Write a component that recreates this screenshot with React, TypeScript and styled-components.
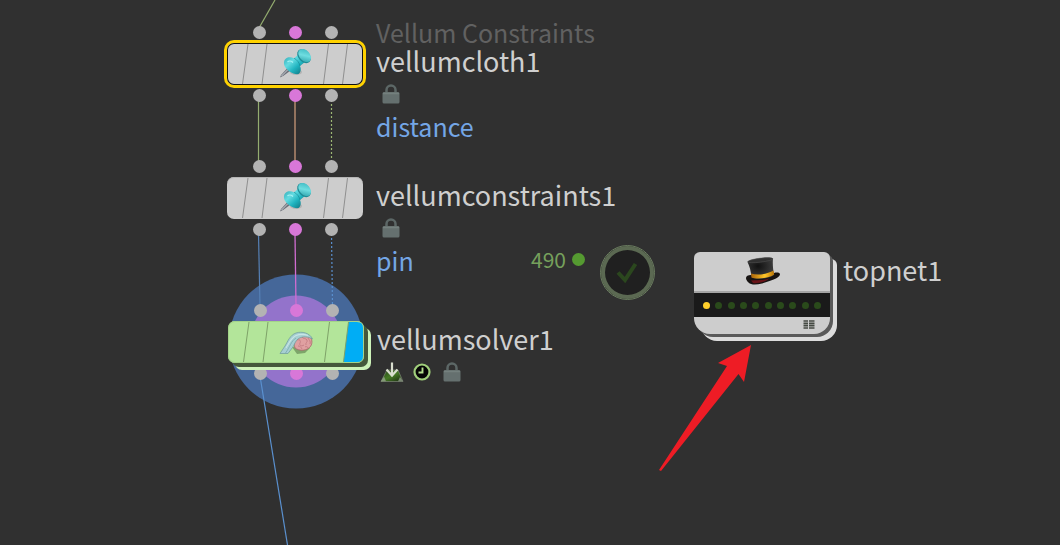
import React from "react";
import styled, { createGlobalStyle } from "styled-components";

const GlobalStyle = createGlobalStyle`
  *, *::before, *::after { box-sizing: border-box; }
  body {
    margin: 0;
    background: #303030;
    font-family: "Noto Sans CJK SC", "Noto Sans", sans-serif;
  }
`;

const GRAY = "#b3b3b3";
const PINK = "#d877d8";

const Network = styled.main`
  position: relative;
  min-height: 100vh;
  overflow: hidden;
  background: #303030;
`;

const Layer = styled.svg`
  position: absolute;
  inset: 0;
  width: 100%;
  height: 100%;
  pointer-events: none;
`;

const Placed = styled.div<{ $x: number; $y: number }>`
  position: absolute;
  left: ${(p) => p.$x}px;
  top: ${(p) => p.$y}px;
`;

const NodeColumn = styled(Placed)`
  width: 136px;
  display: flex;
  flex-direction: column;
  gap: 4px;
`;

const PortRow = styled.div`
  display: flex;
  justify-content: center;
  gap: 23px;
`;

const Port = styled.span<{ $color: string }>`
  width: 13px;
  height: 13px;
  border-radius: 50%;
  background: ${(p) => p.$color};
`;

type Variant = "plain" | "selected" | "displayed";

const bodyShadow: Record<Variant, string> = {
  plain: "inset 0 1px 0 #b5b5b5",
  selected: "inset 0 0 0 1px #111, 0 0 0 3px #ffd200",
  displayed: "inset 0 0 0 1px #a3d389, 4px 4px 0 #45583b, 7px 7px 0 #cdf2b9",
};

const Body = styled.button<{ $variant: Variant }>`
  position: relative;
  display: flex;
  align-items: center;
  justify-content: center;
  width: 100%;
  height: 42px;
  padding: 0;
  border: 0;
  border-radius: 7px;
  color: ${(p) => (p.$variant === "displayed" ? "#7ea268" : "#8f8f8f")};
  background: ${(p) => (p.$variant === "displayed" ? "#b3e59a" : "#cdcdcd")};
  box-shadow: ${(p) => bodyShadow[p.$variant]};
`;

const Slots = styled.svg`
  position: absolute;
  inset: 0;
`;

const Icon = styled.svg`
  position: relative;
  flex: none;
  display: block;
`;

const Caption = styled(Placed)`
  display: flex;
  flex-direction: column;
  white-space: nowrap;
`;

const Line = styled.span<{ $color: string }>`
  font-size: 25px;
  line-height: 28px;
  color: ${(p) => p.$color};
`;

const Name = styled.h2`
  margin: 0;
  font-size: 27px;
  font-weight: 400;
  line-height: 30px;
  color: #cfcfcf;
`;

const Badges = styled.div`
  display: flex;
  height: 36px;
`;

const Badge = styled.span`
  display: flex;
  align-items: center;
  justify-content: center;
  width: 30px;
`;

const TopNode = styled(Placed)`
  width: 136px;
  display: flex;
  flex-direction: column;
  border-radius: 6px 6px 16px 16px;
  background: #cdcdcd;
  box-shadow: 3px 3px 0 #5a5a5a, 7px 7px 0 #dcdcdc;
`;

const HatArea = styled.div`
  display: flex;
  justify-content: center;
  height: 41px;
  border-bottom: 2px solid #a4a4a4;
`;

const WorkItems = styled.div`
  display: flex;
  align-items: center;
  justify-content: space-between;
  height: 24px;
  padding: 0 9px;
  background: #1a1a1a;
`;

const Item = styled.span<{ $active: boolean }>`
  width: 7px;
  height: 7px;
  border-radius: 50%;
  background: ${(p) => (p.$active ? "#ffcf2b" : "#2a4a1b")};
`;

const TopFooter = styled.div`
  display: flex;
  justify-content: flex-end;
  height: 17px;
  padding: 3px 15px 0 0;
`;

const Status = styled(Placed)`
  display: flex;
  gap: 15px;
`;

const Count = styled.div`
  display: flex;
  align-items: center;
  gap: 6px;
  height: 28px;
  font-size: 21px;
  line-height: 26px;
  color: #76a05c;

  &::after {
    content: "";
    width: 13px;
    height: 13px;
    border-radius: 50%;
    background: #559a31;
  }
`;

const Done = styled.span`
  display: flex;
  align-items: center;
  justify-content: center;
  width: 55px;
  height: 55px;
  border: 1px solid #6b7d60;
  border-radius: 50%;
  background: #202020;
  box-shadow: inset 0 0 0 4px #5b6952;
`;

function PinIcon() {
  return (
    <Icon width="40" height="38" viewBox="0 0 40 38" aria-hidden="true">
      <defs>
        <linearGradient id="pinBody" x1="0" y1="0" x2="1" y2="1">
          <stop offset="0" stopColor="#2ba3af" />
          <stop offset="0.35" stopColor="#63dbe1" />
          <stop offset="0.6" stopColor="#20b4c0" />
          <stop offset="1" stopColor="#0b6470" />
        </linearGradient>
        <linearGradient id="pinHead" x1="0" y1="0" x2="1" y2="1">
          <stop offset="0" stopColor="#35b3bd" />
          <stop offset="0.5" stopColor="#6fdde0" />
          <stop offset="1" stopColor="#249ba5" />
        </linearGradient>
      </defs>
      <ellipse cx="21" cy="27" rx="6" ry="3" fill="#777" opacity="0.3" />
      <path d="M5 32.6 6 30 12 23.5 15 26 8.5 30.8Z" fill="#6d717a" />
      <path d="M6.5 31 12.5 25" stroke="#c9ced4" strokeWidth="1" />
      <path
        d="M10 14.5C12 11.8 16 12 19 13.2L23.5 9.5 30.5 16.5 25 21C26.6 24 25.5 28 23.5 29 19.5 30 10 25.5 9 19 8.8 17 9.2 15.5 10 14.5Z"
        fill="url(#pinBody)"
      />
      <path d="M19 13.2C22 14.5 24.5 18 25 21" stroke="#168793" strokeWidth="1" fill="none" opacity="0.6" />
      <path d="M12.5 17C14 15.5 16.5 16 18 17.5" stroke="#a6f2f4" strokeWidth="1.3" fill="none" />
      <ellipse cx="29" cy="11.2" rx="8" ry="5.6" transform="rotate(47 29 11.2)" fill="#1f8b95" />
      <ellipse cx="29.7" cy="10.5" rx="7.6" ry="5.2" transform="rotate(47 29.7 10.5)" fill="url(#pinHead)" />
    </Icon>
  );
}

function ClothIcon() {
  return (
    <Icon width="44" height="34" viewBox="0 0 44 34" aria-hidden="true">
      <path d="M18 22 36 23 31 28 23 29Z" fill="#48663a" opacity="0.5" />
      <path
        d="M22 13C25 9 33 8 37 13 39 17 37.5 21 35 23 31 26 25 26 21 23 19.500 19 20 16 22 13Z"
        fill="#e0a0a1"
        stroke="#a9676b"
        strokeWidth="0.8"
      />
      <path
        d="M23 15c3-1 4 1 3 3s1 4 4 2M28 12c1 2 4 1 5 3s-2 3-1 5M24 21c2 0 3 1 4 3M34 13c1 2 3 3 2 6M31 22c1-1 3 0 3 1"
        stroke="#c47d82"
        strokeWidth="0.9"
        fill="none"
      />
      <path
        d="M6 28.500 11 21C14 16 16 10 22 8 28 6 36 8 38.500 14 34 11.500 29 11 24.500 13.500 21 16 20.500 20 18.500 22.500L14 28.500Z"
        fill="#a6cfd2"
        stroke="#6b999b"
        strokeWidth="0.7"
      />
      <path d="M12 23C15 18 17 13 22 10.500 26 9 30 9 34 10.500" stroke="#c8e5e5" strokeWidth="1.1" fill="none" />
      <path d="M11.500 28C16 22 17 16 22 13" stroke="#7daeb0" strokeWidth="0.9" fill="none" />
    </Icon>
  );
}

function HatIcon() {
  return (
    <Icon width="40" height="38" viewBox="0 0 40 38" aria-hidden="true">
      <defs>
        <radialGradient id="hatFelt" cx="0.4" cy="0.4" r="0.7">
          <stop offset="0" stopColor="#111" />
          <stop offset="1" stopColor="#444" />
        </radialGradient>
        <linearGradient id="hatBand">
          <stop offset="0" stopColor="#a86208" />
          <stop offset="0.6" stopColor="#ffc629" />
          <stop offset="1" stopColor="#b87308" />
        </linearGradient>
      </defs>
      <path
        d="M4 26C4 24 6 23 9 23L32 21C35 20 38 20.5 38 22.5 37 26.5 28 29 20 31.5 14 33 9 33 6.5 30.5 5 29 4 27.5 4 26Z"
        fill="#171312"
      />
      <path d="M9 28.5C15 28 22 28.5 27 26.5 24 30 15 31.8 11 31Z" fill="#681318" />
      <path d="M5.5 10C7 7 28 4 31 6.5 30.5 12 31 17 32 23 26 27 15 28 9.5 25.5 9 19 7.5 14 5.5 10Z" fill="url(#hatFelt)" />
      <ellipse cx="18.2" cy="8.2" rx="12.5" ry="2" transform="rotate(-7 18.2 8.2)" fill="#303030" stroke="#555" strokeWidth="0.5" />
      <path d="M9 21.5C16 23.5 26 22 31.5 18.5L32.2 22.5C26 26.5 15 27.5 9.5 25.5Z" fill="url(#hatBand)" />
    </Icon>
  );
}

function LockIcon() {
  return (
    <Icon width="18" height="20" viewBox="0 0 18 20" role="img" aria-label="Locked">
      <path d="M4.5 9V6a4.500 4.500 0 0 1 9 0v3" fill="none" stroke="#5c6766" strokeWidth="2.5" />
      <rect x="0.5" y="8" width="17" height="11.5" rx="1.5" fill="#65706f" />
      <path d="M1 9.5h16" stroke="#74807e" strokeWidth="1.5" />
    </Icon>
  );
}

function CacheIcon() {
  return (
    <Icon width="24" height="20" viewBox="0 0 24 20" role="img" aria-label="Loaded">
      <defs>
        <linearGradient id="hill" x1="0" y1="0" x2="1" y2="1">
          <stop offset="0" stopColor="#26401b" />
          <stop offset="0.5" stopColor="#457a24" />
          <stop offset="1" stopColor="#172410" />
        </linearGradient>
      </defs>
      <path d="M1 19.5 7 8H18L23 19.5Z" fill="url(#hill)" stroke="#8b9685" strokeWidth="0.6" />
      <path d="M1 19.2 4 14.5 6 19.2ZM18 19.2 20 15 23 19.2Z" fill="#a0a99a" opacity="0.7" />
      <path d="M12 0.5V13M6.5 7.5 12 13.5 17.5 7.5" fill="none" stroke="#d9dfcf" strokeWidth="2.2" />
    </Icon>
  );
}

function ClockIcon() {
  return (
    <Icon width="18" height="18" viewBox="0 0 18 18" role="img" aria-label="Time dependent">
      <circle cx="9" cy="9" r="7.5" fill="#050505" stroke="#a0cf7b" strokeWidth="2.2" />
      <path d="M9.5 4.5V9.5H5.5" fill="none" stroke="#b5e08f" strokeWidth="1.9" />
    </Icon>
  );
}

function TableIcon() {
  return (
    <Icon width="12" height="9" viewBox="0 0 12 9" aria-hidden="true">
      <path
        d="M0.500 1H5M6 1H11.500M0.500 3.300H5M6 3.300H11.500M0.500 5.700H5M6 5.700H11.500M0.500 8H5M6 8H11.500"
        stroke="#454a43"
        strokeWidth="1.7"
      />
    </Icon>
  );
}

const badgeIcons = { lock: LockIcon, cache: CacheIcon, clock: ClockIcon };
type BadgeName = keyof typeof badgeIcons;

function Ports() {
  return (
    <PortRow>
      <Port $color={GRAY} />
      <Port $color={PINK} />
      <Port $color={GRAY} />
    </PortRow>
  );
}

interface NodeProps {
  x: number;
  y: number;
  name: string;
  variant?: Variant;
  children: React.ReactNode;
}

function GraphNode({ x, y, name, variant = "plain", children }: NodeProps) {
  return (
    <NodeColumn $x={x} $y={y}>
      <Ports />
      <Body type="button" $variant={variant} aria-label={name}>
        <Slots width="136" height="42" viewBox="0 0 136 42" aria-hidden="true">
          {variant === "displayed" && (
            <path d="M120.5 1H129Q135 1 135 7V35Q135 41 129 41H115.5Z" fill="#00adf5" />
          )}
          <path d="M21 1 15.5 41M40 1 35 41M101.5 1 96.5 41M120.5 1 115.5 41" stroke="currentColor" fill="none" />
        </Slots>
        {children}
      </Body>
      <Ports />
    </NodeColumn>
  );
}

interface LabelProps {
  x: number;
  y: number;
  type?: string;
  name: string;
  badges?: BadgeName[];
  parameter?: string;
}

function NodeLabel({ x, y, type, name, badges = [], parameter }: LabelProps) {
  return (
    <Caption $x={x} $y={y}>
      {type && <Line $color="#616161">{type}</Line>}
      <Name>{name}</Name>
      {badges.length > 0 && (
        <Badges>
          {badges.map((badge) => {
            const Glyph = badgeIcons[badge];
            return (
              <Badge key={badge}>
                <Glyph />
              </Badge>
            );
          })}
        </Badges>
      )}
      {parameter && <Line $color="#74a6e6">{parameter}</Line>}
    </Caption>
  );
}

export default function App() {
  return (
    <>
      <GlobalStyle />
      <Network>
        <Layer aria-hidden="true">
          <circle cx="296" cy="341.5" r="67" fill="#456799" />
          <circle cx="296" cy="341.5" r="46" fill="#9373cb" />
          <g fill="none" strokeWidth="1.2">
            <path d="M275 0 259 28" stroke="#94ad70" />
            <path d="M258.5 100V162" stroke="#94ad70" />
            <path d="M295 100V162" stroke="#b58a6e" strokeWidth="1.5" />
            <path d="M331.5 100V162" stroke="#9db774" strokeDasharray="2 2" />
            <path d="M258.5 234 260 306" stroke="#5580b5" />
            <path d="M295 234 296 306" stroke="#d06cd0" strokeWidth="1.3" />
            <path d="M331.5 234 332.5 306" stroke="#5a90cf" strokeDasharray="2 2" />
            <path d="M260 376 287.5 545" stroke="#5a90cf" />
          </g>
        </Layer>

        <GraphNode x={227} y={26} name="vellumcloth1" variant="selected">
          <PinIcon />
        </GraphNode>
        <NodeLabel x={376} y={18} type="Vellum Constraints" name="vellumcloth1" badges={["lock"]} parameter="distance" />

        <GraphNode x={227} y={160} name="vellumconstraints1">
          <PinIcon />
        </GraphNode>
        <NodeLabel x={376} y={180} name="vellumconstraints1" badges={["lock"]} parameter="pin" />

        <GraphNode x={228} y={304} name="vellumsolver1" variant="displayed">
          <ClothIcon />
        </GraphNode>
        <NodeLabel x={377} y={324} name="vellumsolver1" badges={["cache", "clock", "lock"]} />

        <Status $x={531} $y={245}>
          <Count>490</Count>
          <Done>
            <Icon width="22" height="22" viewBox="0 0 22 22" role="img" aria-label="Cooked">
              <path d="M2 10.5 9 18 19.5 2" fill="none" stroke="#2b471e" strokeWidth="4" />
            </Icon>
          </Done>
        </Status>

        <TopNode $x={694} $y={252}>
          <HatArea>
            <HatIcon />
          </HatArea>
          <WorkItems>
            {Array.from({ length: 10 }, (_, i) => (
              <Item key={i} $active={i === 0} />
            ))}
          </WorkItems>
          <TopFooter>
            <TableIcon />
          </TopFooter>
        </TopNode>
        <NodeLabel x={843} y={255} name="topnet1" />

        <Layer aria-hidden="true">
          <path d="M751 345 744 382 738.5 374 661 471 659 470 727 366 718 363Z" fill="#ee1c25" />
        </Layer>
      </Network>
    </>
  );
}
